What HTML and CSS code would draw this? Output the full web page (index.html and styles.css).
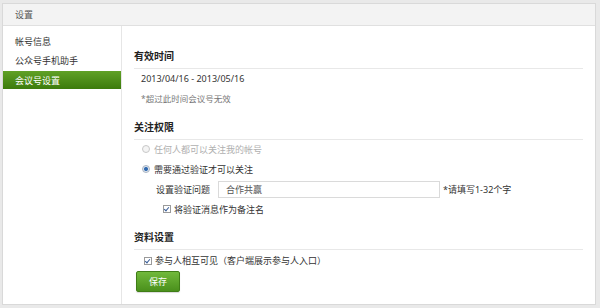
FILE: index.html
```html
<!DOCTYPE html>
<html lang="zh-CN">
<head>
<meta charset="utf-8">
<title>设置</title>
<link rel="stylesheet" href="styles.css">
</head>
<body>
<div class="panel">
  <div class="panel-head">设置</div>
  <div class="panel-body">
    <ul class="side">
      <li class="side-item">帐号信息</li>
      <li class="side-item">公众号手机助手</li>
      <li class="side-item active">会议号设置</li>
    </ul>
    <div class="main">
      <h2 class="sec-title first">有效时间</h2>
      <div class="date">2013/04/16 - 2013/05/16</div>
      <div class="note">*超过此时间会议号无效</div>

      <h2 class="sec-title">关注权限</h2>
      <div class="opt disabled"><span class="radio"></span>任何人都可以关注我的帐号</div>
      <div class="opt opt2"><span class="radio on"></span>需要通过验证才可以关注</div>
      <div class="field">
        <span class="field-label">设置验证问题</span>
        <span class="input">合作共赢</span>
        <span class="hint">*请填写1-32个字</span>
      </div>
      <div class="opt check-sub"><span class="check"></span>将验证消息作为备注名</div>

      <h2 class="sec-title">资料设置</h2>
      <div class="opt check-main"><span class="check"></span>参与人相互可见（客户端展示参与人入口）</div>
      <button class="btn">保存</button>
    </div>
  </div>
</div>
</body>
</html>
```
FILE: styles.css
```css
* { box-sizing: border-box; }
html, body { margin: 0; padding: 0; }
body {
  background: #e9e9e9;
  width: 600px;
  height: 308px;
  padding: 3px 4px 3px 2px;
  font-family: "Noto Sans", "Noto Sans CJK SC", sans-serif;
  font-size: 9px;
  color: #333;
}
.panel {
  background: #fff;
  border: 1px solid #d9d9d9;
  height: 302px;
  display: flex;
  flex-direction: column;
}
.panel-head {
  height: 22px;
  line-height: 21px;
  background: #f3f3f3;
  border-bottom: 1px solid #e0e0e0;
  padding-left: 12px;
  color: #555;
  flex: none;
}
.panel-body {
  flex: 1;
  display: flex;
}
.side {
  list-style: none;
  margin: 0;
  padding: 6px 0 0 0;
  width: 119px;
  border-right: 1px solid #e6e6e6;
  flex: none;
}
.side-item {
  height: 19px;
  line-height: 19px;
  padding-left: 12px;
  color: #333;
}
.side-item.active {
  background: linear-gradient(#60a126, #3c7b0c);
  color: #fff;
  border-top: 1px solid #fff;
}
.main {
  flex: 1;
  padding: 0 12px 0 12px;
}
.sec-title {
  margin: 11px 0 0 0;
  font-size: 10px;
  font-weight: bold;
  color: #222;
  line-height: 16px;
  padding-bottom: 4px;
  border-bottom: 1px solid #e8e8e8;
}
.sec-title.first { margin-top: 22px; }
.date {
  margin-top: 1px;
  line-height: 18px;
  padding-left: 7px;
  color: #333;
}
.note {
  margin-top: 2px;
  line-height: 18px;
  padding-left: 7px;
  color: #777;
  font-size: 8.5px;
}
.opt {
  display: flex;
  align-items: center;
  height: 18px;
  padding-left: 8px;
  color: #333;
}
.opt.disabled { color: #b0b0b0; }
.opt2 { margin-top: 2px; }
.radio {
  width: 8px;
  height: 8px;
  border-radius: 50%;
  border: 1px solid #c8c8c8;
  background: #f4f4f4;
  margin-right: 4px;
  position: relative;
}
.radio.on {
  border-color: #a9b4c2;
  background: radial-gradient(circle, #2d64a8 0, #3b72b6 1.6px, #dfe6ee 2.4px);
}
.field {
  display: flex;
  align-items: center;
  height: 19px;
  margin-top: 2px;
  padding-left: 22px;
}
.field-label { width: 62px; }
.input {
  width: 222px;
  height: 17px;
  border: 1px solid #dadada;
  line-height: 15px;
  padding-left: 7px;
  color: #555;
}
.hint { margin-left: 3px; }
.check-sub {
  margin-top: 1px;
  padding-left: 29px;
  height: 18px;
}
.check-main {
  margin-top: 1px;
  padding-left: 10px;
  height: 19px;
}
.check {
  width: 8px;
  height: 8px;
  border: 1px solid #9a9a9a;
  background: #fff;
  margin-right: 3px;
  position: relative;
}
.check::after {
  content: "";
  position: absolute;
  left: 1px;
  top: 0px;
  width: 2px;
  height: 4px;
  border: solid #3a5f9a;
  border-width: 0 1.2px 1.2px 0;
  transform: rotate(40deg);
}
.btn {
  display: block;
  margin-top: 1px;
  margin-left: 2px;
  width: 44px;
  height: 21px;
  border: 1px solid #3f7d16;
  border-radius: 2px;
  background: linear-gradient(#71b93b, #4a901c);
  color: #fff;
  font-family: "Noto Sans", "Noto Sans CJK SC", sans-serif;
  font-size: 9px;
  padding: 0;
  box-shadow: 0 1px 1px rgba(0,0,0,0.15);
}
```
